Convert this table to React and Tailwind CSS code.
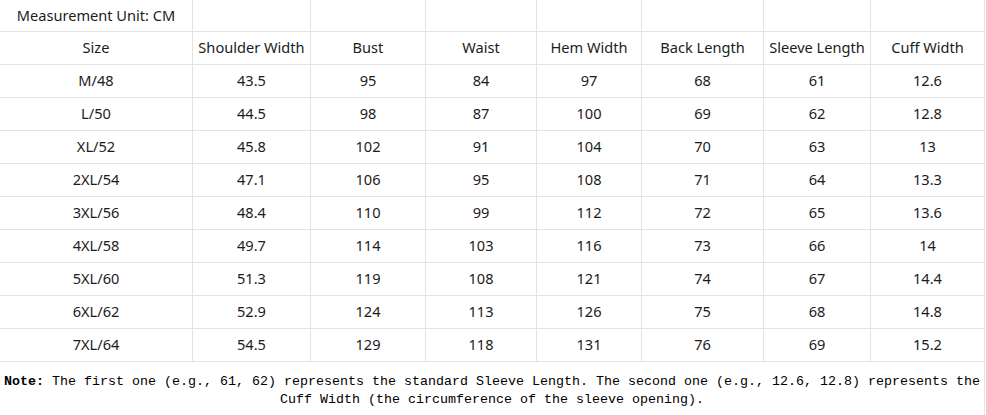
import React from "react";

const headers = ["Size", "Shoulder Width", "Bust", "Waist", "Hem Width", "Back Length", "Sleeve Length", "Cuff Width"];

const rows = [
    ["M/48", "43.5", "95", "84", "97", "68", "61", "12.6"],
    ["L/50", "44.5", "98", "87", "100", "69", "62", "12.8"],
    ["XL/52", "45.8", "102", "91", "104", "70", "63", "13"],
    ["2XL/54", "47.1", "106", "95", "108", "71", "64", "13.3"],
    ["3XL/56", "48.4", "110", "99", "112", "72", "65", "13.6"],
    ["4XL/58", "49.7", "114", "103", "116", "73", "66", "14"],
    ["5XL/60", "51.3", "119", "108", "121", "74", "67", "14.4"],
    ["6XL/62", "52.9", "124", "113", "126", "75", "68", "14.8"],
    ["7XL/64", "54.5", "129", "118", "131", "76", "69", "15.2"],
];

// one row = 8 cells, last column has no right border (the page edge line does that)
const Row = ({ cells, first }) => (
    <>
        {cells.map((c, i) => (
            <div
                key={i}
                className={`${first ? "h-[32px]" : "h-[33px]"} flex items-center justify-center border-b border-[#e3e3e3] ${i < 7 ? "border-r" : ""}`}
            >
                {c}
            </div>
        ))}
    </>
);

export default function App() {
    return (
        <div className="w-[985px] min-h-[415px] bg-white border-r border-[#e3e3e3]">
            <div
                className="grid grid-cols-[193px_118px_115px_111px_105px_122px_107px_113px] text-[14.6px] text-[#1c1c1c]"
                style={{ fontFamily: '"Noto Sans", "Open Sans", sans-serif' }}
            >
                <Row first cells={["Measurement Unit: CM", "", "", "", "", "", "", ""]} />
                <Row cells={headers} />
                {rows.map((r) => (
                    <Row key={r[0]} cells={r} />
                ))}
            </div>
            <p className="pt-[11px] text-center text-[13.33px] leading-[18px] text-black font-['Liberation_Mono',monospace]">
                <span className="font-bold">Note:</span> The first one (e.g., 61, 62) represents the standard Sleeve Length. The second one (e.g., 12.6, 12.8) represents the Cuff Width (the circumference of the sleeve opening).
            </p>
        </div>
    );
}
